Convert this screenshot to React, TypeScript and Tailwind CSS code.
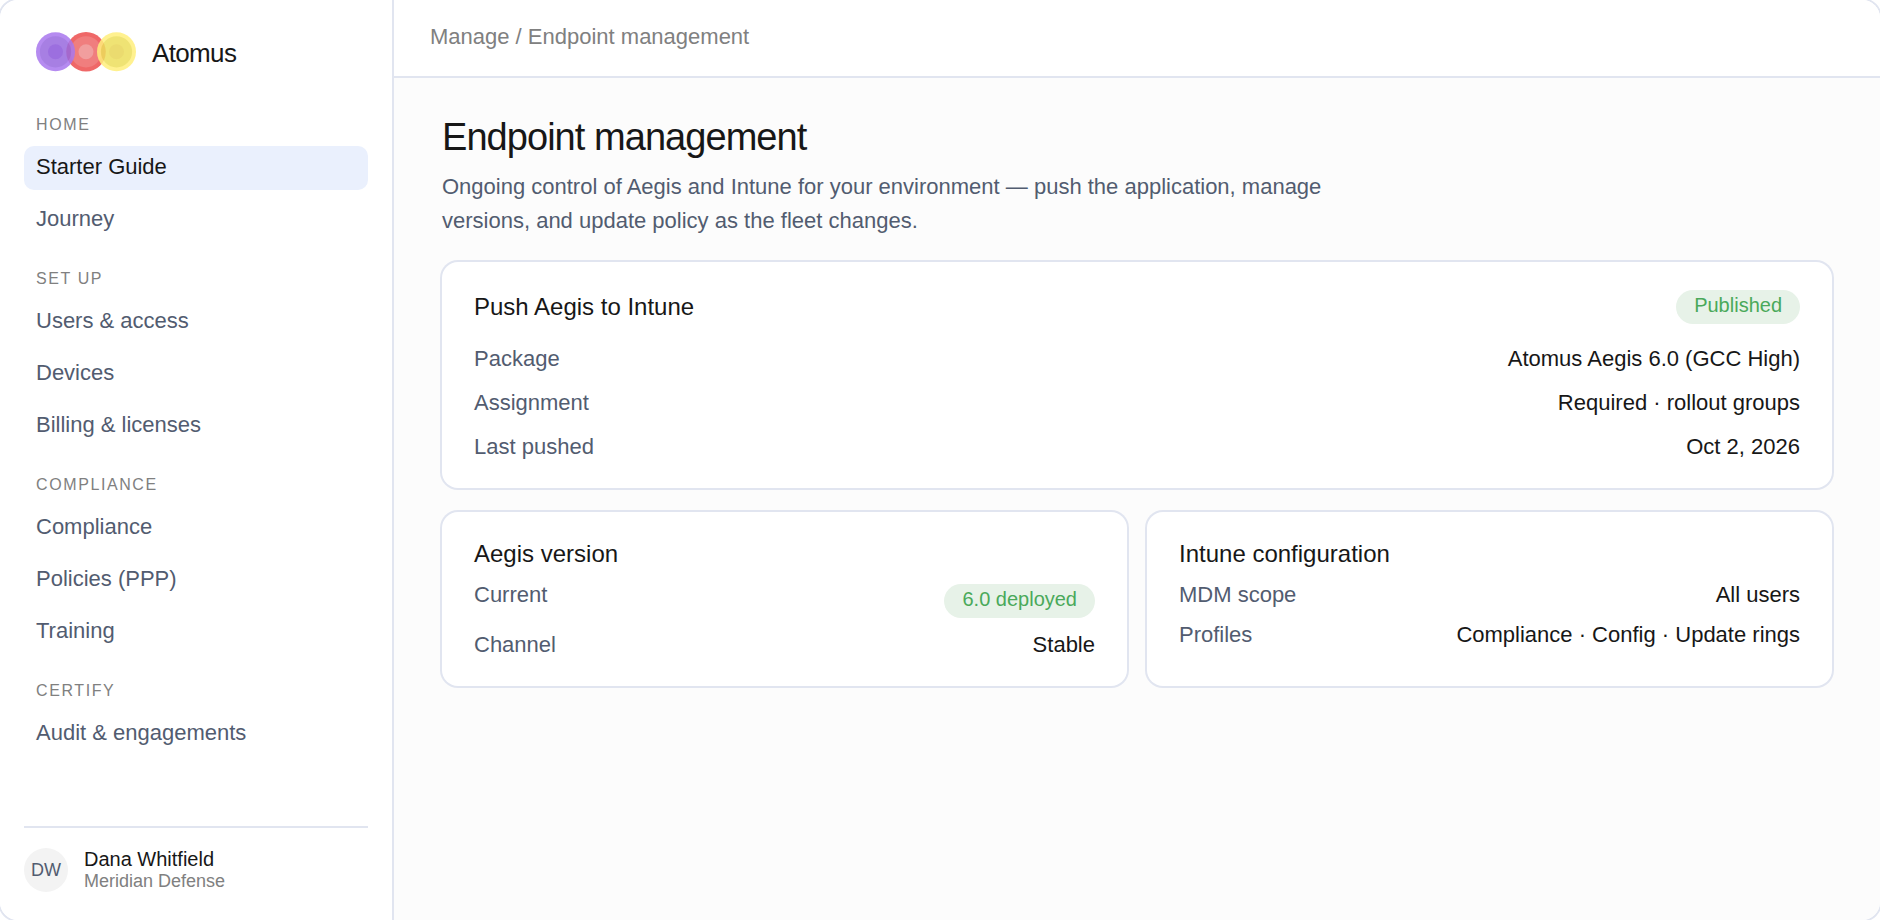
import type { ReactNode } from 'react';

const navGroups = [
  { label: 'Home', items: ['Starter Guide', 'Journey'] },
  { label: 'Set up', items: ['Users & access', 'Devices', 'Billing & licenses'] },
  { label: 'Compliance', items: ['Compliance', 'Policies (PPP)', 'Training'] },
  { label: 'Certify', items: ['Audit & engagements'] },
];

const activeItem = 'Starter Guide';

const Logo = () => (
  <svg width="100" height="40" viewBox="0 0 100 40" aria-hidden="true">
    <circle cx="50" cy="19.8" r="19.8" fill="#ef6868" />
    <circle cx="50" cy="19.8" r="15.6" fill="#f07e7e" />
    <circle cx="50" cy="19.8" r="7.5" fill="#f19e9e" />
    <g opacity="0.85">
      <circle cx="19.5" cy="19.8" r="19.5" fill="#a877ee" />
      <circle cx="19.5" cy="19.8" r="15.6" fill="#9869de" />
      <circle cx="19.5" cy="19.8" r="7.5" fill="#8b56da" />
    </g>
    <g opacity="0.85">
      <circle cx="80.5" cy="19.8" r="19.5" fill="#ffef7c" />
      <circle cx="80.5" cy="19.8" r="15.6" fill="#eddf5c" />
      <circle cx="80.5" cy="19.8" r="7.5" fill="#e8d556" />
    </g>
  </svg>
);

const Sidebar = () => (
  <aside className="flex w-[394px] shrink-0 flex-col border-r-2 border-[#e1e5f0] bg-white px-6 pt-8 pb-7">
    <div className="flex items-start gap-4 px-3">
      <Logo />
      <span className="text-[26px] leading-[42px] tracking-tight text-[#171717]">Atomus</span>
    </div>

    <nav className="mt-10 flex flex-col gap-[26px]">
      {navGroups.map((group) => (
        <div key={group.label}>
          <h2 className="mb-2.5 px-3 text-base leading-[22px] tracking-widest text-[#808080] uppercase">
            {group.label}
          </h2>
          <ul className="flex flex-col gap-2">
            {group.items.map((item) => (
              <li key={item}>
                <a
                  href="#"
                  className={
                    item === activeItem
                      ? 'block rounded-[10px] bg-[#eaf0fd] px-3 pt-2 pb-2.5 text-[22px] leading-[26px] text-[#171717]'
                      : 'block rounded-[10px] px-3 pt-2 pb-2.5 text-[22px] leading-[26px] text-[#525c70]'
                  }
                >
                  {item}
                </a>
              </li>
            ))}
          </ul>
        </div>
      ))}
    </nav>

    {/* Signed-in user */}
    <div className="mt-auto flex items-center gap-4 border-t-2 border-[#e1e5f0] pt-5">
      <div className="flex size-11 items-center justify-center rounded-full bg-[#f3f3f3] text-lg text-[#525c70]">DW</div>
      <div>
        <p className="text-xl leading-[22px] text-[#171717]">Dana Whitfield</p>
        <p className="text-lg leading-[22px] text-[#808080]">Meridian Defense</p>
      </div>
    </div>
  </aside>
);

const Badge = ({ children }: { children: ReactNode }) => (
  <span className="block rounded-full bg-[#e7f2e8] px-[18px] pt-1 pb-2 text-xl leading-[22px] text-[#4aa95a]">
    {children}
  </span>
);

const Card = ({ children }: { children: ReactNode }) => (
  <section className="rounded-2xl bg-white px-8 py-7 ring-2 ring-[#e1e5f0]">{children}</section>
);

const CardTitle = ({ children }: { children: ReactNode }) => (
  <h2 className="text-2xl leading-7 text-[#171717]">{children}</h2>
);

const Row = ({ label, children }: { label: string; children: ReactNode }) => (
  <div className="flex items-start justify-between gap-4 text-[22px] leading-[26px]">
    <dt className="text-[#525c70]">{label}</dt>
    <dd className="text-right text-[#171717]">{children}</dd>
  </div>
);

const App = () => {
  return (
    <div className="h-screen overflow-hidden bg-white font-['Liberation_Sans',Arial,sans-serif]">
      <div className="-m-0.5 flex h-[calc(100vh+4px)] overflow-hidden rounded-[20px] border-2 border-[#e1e5f0]">
        <Sidebar />

        <div className="flex min-w-0 flex-1 flex-col bg-[#fcfcfc]">
          <header className="border-b-2 border-[#e1e5f0] bg-white px-9 pt-6 pb-[26px]">
            <p className="text-[22px] leading-[26px] text-[#808080]">Manage / Endpoint management</p>
          </header>

          <main className="px-12 pt-9">
            <h1 className="text-[38px] leading-[46px] tracking-tight text-[#171717]">Endpoint management</h1>
            <p className="mt-2.5 max-w-[920px] text-[22px] leading-[34px] text-[#525c70]">
              Ongoing control of Aegis and Intune for your environment — push the application, manage versions, and
              update policy as the fleet changes.
            </p>

            <div className="mt-6 flex flex-col gap-6">
              <Card>
                <div className="flex items-center justify-between">
                  <CardTitle>Push Aegis to Intune</CardTitle>
                  <Badge>Published</Badge>
                </div>
                <dl className="mt-[22px] flex flex-col gap-[18px]">
                  <Row label="Package">Atomus Aegis 6.0 (GCC High)</Row>
                  <Row label="Assignment">Required · rollout groups</Row>
                  <Row label="Last pushed">Oct 2, 2026</Row>
                </dl>
              </Card>

              <div className="grid grid-cols-2 gap-5">
                <Card>
                  <CardTitle>Aegis version</CardTitle>
                  <dl className="mt-3.5 flex flex-col gap-3.5">
                    <Row label="Current">
                      <div className="pt-0.5">
                        <Badge>6.0 deployed</Badge>
                      </div>
                    </Row>
                    <Row label="Channel">Stable</Row>
                  </dl>
                </Card>

                <Card>
                  <CardTitle>Intune configuration</CardTitle>
                  <dl className="mt-3.5 flex flex-col gap-3.5">
                    <Row label="MDM scope">All users</Row>
                    <Row label="Profiles">Compliance · Config · Update rings</Row>
                  </dl>
                </Card>
              </div>
            </div>
          </main>
        </div>
      </div>
    </div>
  );
};

export default App;
